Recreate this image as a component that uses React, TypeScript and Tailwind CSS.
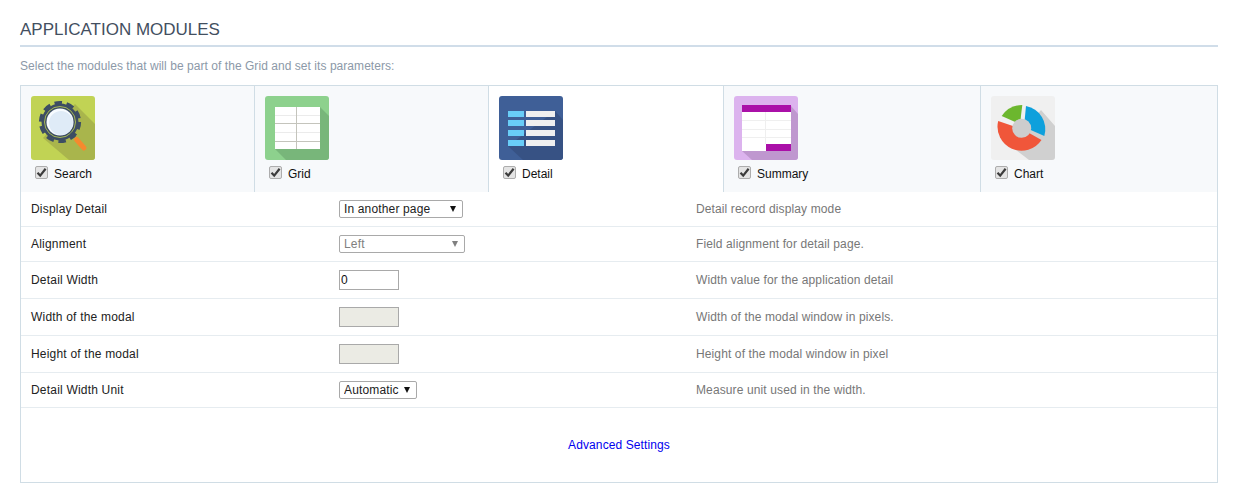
import React from 'react';

const FONT = "font-['Liberation_Sans',Arial,sans-serif]";

function SearchIcon() {
    return (
        <svg width="64" height="64" viewBox="0 0 64 64" className="block rounded-[3px]">
            <rect width="64" height="64" fill="#c1d354" />
            <polygon points="44,8 64,28 64,64 38,64 12,42" fill="#a9b54c" />
            <circle cx="29" cy="26" r="18.5" fill="#3d4d63" />
            <circle cx="29" cy="26" r="19.5" fill="none" stroke="#3d4d63" strokeWidth="3.2" strokeDasharray="7.6 4.65" />
            <circle cx="29" cy="26" r="15.5" fill="#3d4d63" stroke="#c1d354" strokeWidth="0.8" />
            <circle cx="29" cy="26" r="13.5" fill="#f7fbff" />
            <circle cx="30" cy="27" r="12" fill="#dfebf7" />
            <line x1="40" y1="37" x2="44" y2="41" stroke="#3d4d63" strokeWidth="3" />
            <line x1="45.5" y1="43.5" x2="53" y2="52" stroke="#f58a2e" strokeWidth="5" strokeLinecap="round" />
        </svg>
    );
}

function GridIcon() {
    return (
        <svg width="64" height="64" viewBox="0 0 64 64" className="block rounded-[3px]">
            <rect width="64" height="64" fill="#8dd18d" />
            <polygon points="55,11 64,20 64,64 21,64 10,53" fill="#78b67a" />
            <rect x="10" y="11" width="45" height="42" fill="#ffffff" />
            <g stroke="#ebebeb" strokeWidth="1">
                <line x1="10" y1="19.5" x2="55" y2="19.5" />
                <line x1="10" y1="36.5" x2="55" y2="36.5" />
            </g>
            <g stroke="#c4c4bc" strokeWidth="1">
                <line x1="10" y1="27.5" x2="55" y2="27.5" />
                <line x1="10" y1="45.5" x2="55" y2="45.5" />
                <line x1="31.5" y1="11" x2="31.5" y2="53" />
            </g>
        </svg>
    );
}

function DetailIcon() {
    return (
        <svg width="64" height="64" viewBox="0 0 64 64" className="block rounded-[3px]">
            <rect width="64" height="64" fill="#3f5f97" />
            <polygon points="56,15 64,24 64,64 24,64 9,50" fill="#375284" />
            {[15, 24, 34, 44].map((y) => (
                <g key={y}>
                    <rect x="9" y={y} width="16" height="6" fill="#69cdf8" />
                    <rect x="27" y={y} width="29" height="6" fill="#efefef" />
                </g>
            ))}
        </svg>
    );
}

function SummaryIcon() {
    return (
        <svg width="64" height="64" viewBox="0 0 64 64" className="block rounded-[3px]">
            <rect width="64" height="64" fill="#dcb3ee" />
            <polygon points="57,10 64,18 64,64 18,64 8,55" fill="#bf97cf" />
            <rect x="8" y="9" width="49" height="46" fill="#ffffff" />
            <g stroke="#efefef" strokeWidth="1">
                <line x1="8" y1="24.5" x2="57" y2="24.5" />
                <line x1="8" y1="33.5" x2="57" y2="33.5" />
                <line x1="8" y1="41.5" x2="57" y2="41.5" />
                <line x1="31.5" y1="16" x2="31.5" y2="48" />
            </g>
            <rect x="8" y="9" width="49" height="7" fill="#aa10a8" />
            <rect x="32" y="48" width="25" height="7" fill="#aa10a8" />
        </svg>
    );
}

function ChartIcon() {
    return (
        <svg width="64" height="64" viewBox="0 0 64 64" className="block rounded-[3px]">
            <rect width="64" height="64" fill="#f0f0f0" />
            <polygon points="50,14 64,30 64,64 38,64 20,50" fill="#d0d0d0" />
            <path d="M7.2 25 A24 24 0 0 0 50.5 44 L31 33 Z" fill="#f0563a" />
            <path d="M35 10 A23.5 23.5 0 0 1 53.3 40 L33 31 Z" fill="#0ea0dc" />
            <path d="M10.7 20 A25 25 0 0 1 31.3 9 L29 28 Z" fill="#6cb72e" />
            <circle cx="30.7" cy="32.3" r="9.5" fill="#cdcdcd" />
        </svg>
    );
}

function CheckMark() {
    return (
        <span className="flex h-[13px] w-[13px] shrink-0 items-center justify-center rounded-[2px] border border-[#adadad] bg-[#e4e4e4]">
            <svg width="11" height="11" viewBox="0 0 11 11">
                <path d="M1.5 5.8 L4.2 8.6 L9.6 1.8" fill="none" stroke="#3c3c3c" strokeWidth="2.2" />
            </svg>
        </span>
    );
}

const tabs = [
    { name: 'Search', width: 'w-[234px]', Icon: SearchIcon },
    { name: 'Grid', width: 'w-[234px]', Icon: GridIcon },
    { name: 'Detail', width: 'w-[235px]', Icon: DetailIcon, active: true },
    { name: 'Summary', width: 'w-[257px]', Icon: SummaryIcon },
    { name: 'Chart', width: 'flex-1', Icon: ChartIcon },
];

function Dropdown({ value, width, disabled }: { value: string; width: string; disabled?: boolean }) {
    return (
        <div className={`relative h-[18px] ${width}`}>
            <select
                disabled={disabled}
                defaultValue={value}
                className={`h-full w-full appearance-none rounded-[2px] border border-[#a9a9a9] bg-white pl-1 text-[12px] leading-[14px] tracking-[0.15px] outline-none ${disabled ? 'text-[#808080]' : 'text-[#222222]'}`}
            >
                <option>{value}</option>
            </select>
            <svg width="6" height="6" viewBox="0 0 6 6" className="absolute right-[7px] top-[6px]">
                <polygon points="0,0 6,0 3,6" fill={disabled ? '#808080' : '#111111'} />
            </svg>
        </div>
    );
}

function TextBox({ value, disabled }: { value?: string; disabled?: boolean }) {
    return (
        <input
            type="text"
            disabled={disabled}
            defaultValue={value}
            className={`h-[20px] w-[60px] border border-[#a9a9a9] px-[1px] text-[12px] text-[#111111] outline-none ${disabled ? 'bg-[#ebebe4]' : 'bg-white'}`}
        />
    );
}

const rows = [
    { label: 'Display Detail', hint: 'Detail record display mode', height: 'h-[35px]', field: <Dropdown value="In another page" width="w-[124px]" /> },
    { label: 'Alignment', hint: 'Field alignment for detail page.', height: 'h-[35px]', field: <Dropdown value="Left" width="w-[126px]" disabled /> },
    { label: 'Detail Width', hint: 'Width value for the application detail', height: 'h-[37px]', field: <TextBox value="0" /> },
    { label: 'Width of the modal', hint: 'Width of the modal window in pixels.', height: 'h-[37px]', field: <TextBox disabled /> },
    { label: 'Height of the modal', hint: 'Height of the modal window in pixel', height: 'h-[37px]', field: <TextBox disabled /> },
    { label: 'Detail Width Unit', hint: 'Measure unit used in the width.', height: 'h-[35px]', field: <Dropdown value="Automatic" width="w-[78px]" /> },
];

export default function App() {
    return (
        <div className={`${FONT} h-[503px] bg-white px-5 pt-[21px] text-[12px]`}>
            <h1 className="h-[26px] border-b-2 border-[#d0dde9] pb-[7px] text-[17px] leading-[17px] text-[#434f5f]">
                APPLICATION MODULES
            </h1>
            <p className="mt-[12px] h-[26px] text-[12px] leading-[15px] tracking-[0.05px] text-[#8c99a8]">
                Select the modules that will be part of the Grid and set its parameters:
            </p>

            <div className="h-[398px] border border-[#d0dde5]">
                <div className="flex h-[106px]">
                    {tabs.map(({ name, width, Icon, active }, i) => (
                        <div
                            key={name}
                            className={`${width} pl-[10px] pt-[10px] ${i < tabs.length - 1 ? 'border-r border-[#d0dde5]' : ''} ${active ? 'bg-white' : 'bg-[#f7f9fb]'}`}
                        >
                            <Icon />
                            <label className="ml-1 mt-[6px] flex items-start gap-[6px] text-[12px] leading-[14px] text-[#111111]">
                                <CheckMark />
                                <span className="mt-[1px]">{name}</span>
                            </label>
                        </div>
                    ))}
                </div>

                {rows.map((row) => (
                    <div key={row.label} className={`flex ${row.height} items-center border-b border-[#e6ecf0] pl-[10px] text-[#222222]`}>
                        <span className="w-[308px] tracking-[0.2px]">{row.label}</span>
                        <div className="w-[357px]">{row.field}</div>
                        <span className="tracking-[0.12px] text-[#777777]">{row.hint}</span>
                    </div>
                ))}

                <div className="flex h-[74px] items-center justify-center">
                    <a href="#" className="text-[#0000ee] tracking-[0.1px]">Advanced Settings</a>
                </div>
            </div>
        </div>
    );
}
